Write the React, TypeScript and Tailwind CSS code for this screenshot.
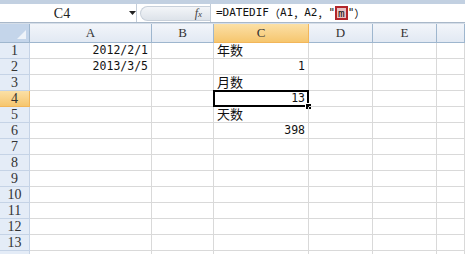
import React from "react"

const cols = ["A", "B", "C", "D", "E", ""]
const selCol = 2
const selRow = 4

type Cell = { text: string; right?: boolean; cjk?: boolean }

const data: Record<number, Record<number, Cell>> = {
    1: { 0: { text: "2012/2/1", right: true }, 2: { text: "年数", cjk: true } },
    2: { 0: { text: "2013/3/5", right: true }, 2: { text: "1", right: true } },
    3: { 2: { text: "月数", cjk: true } },
    4: { 2: { text: "13", right: true } },
    5: { 2: { text: "天数", cjk: true } },
    6: { 2: { text: "398", right: true } },
}

const mono = { fontFamily: '"DejaVu Sans Mono", monospace' }
const serif = { fontFamily: '"Liberation Serif", serif' }
const cjk = { fontFamily: '"Noto Sans CJK SC", sans-serif' }

function FormulaBar() {
    return (
        <div className="flex h-[19px] bg-white border-b border-[#a9b8c9]">
            {/* Name box */}
            <div className="relative flex w-[137px] items-center border-r border-[#c3cdd9]">
                <div className="w-[124px] text-center text-[14px] text-[#222]" style={serif}>C4</div>
                <svg width="7" height="4" viewBox="0 0 7 4" className="ml-[5px]">
                    <path d="M0 0h7L3.5 4z" fill="#222" />
                </svg>
            </div>
            {/* fx area */}
            <div className="flex w-[73px] items-center pl-[3px]">
                <div className="flex h-[15px] flex-1 items-center justify-end rounded-l-full border border-r-0 border-[#c8d0da] bg-gradient-to-b from-[#f3f5f8] to-[#dde3ea] pr-[8px]">
                    <span className="text-[12px] italic text-[#444]" style={serif}>
                        f<span className="text-[9px]">x</span>
                    </span>
                </div>
            </div>
            {/* Formula */}
            <div className="flex flex-1 items-center border-l border-[#c3cdd9] pl-[5px] text-[#111]">
                <span className="text-[11px]" style={mono}>=DATEDIF</span>
                <span className="text-[11px]" style={cjk}>（</span>
                <span className="text-[11px]" style={mono}>A1</span>
                <span className="text-[11px]" style={cjk}>，</span>
                <span className="text-[11px]" style={mono}>A2</span>
                <span className="text-[11px]" style={cjk}>，</span>
                <span className="text-[11px]" style={mono}>"</span>
                <span className="flex h-[14px] items-center border-2 border-[#b3262b] bg-[#e9c3c3] px-[1px] text-[11px] leading-none" style={mono}>m</span>
                <span className="text-[11px]" style={mono}>"</span>
                <span className="text-[11px]" style={cjk}>）</span>
            </div>
        </div>
    )
}

function HeaderRow() {
    return (
        <>
            <div className="relative h-[19px] border-r border-b border-[#9eb6ce] bg-[#c4d5ea]">
                <svg width="9" height="9" viewBox="0 0 9 9" className="absolute right-[3px] bottom-[3px]">
                    <path d="M9 0v9H0z" fill="#eef3f9" />
                </svg>
            </div>
            {cols.map((c, i) => (
                <div
                    key={i}
                    className={
                        i === selCol
                            ? "flex h-[19px] items-center justify-center border-r border-b border-[#f2b65a] bg-gradient-to-b from-[#fbe0a6] to-[#f6c66e] text-[13px] text-[#333]"
                            : "flex h-[19px] items-center justify-center border-r border-b border-[#9eb6ce] bg-gradient-to-b from-[#f2f5fa] to-[#e2e9f3] text-[13px] text-[#333]"
                    }
                    style={serif}
                >
                    {c}
                </div>
            ))}
        </>
    )
}

function Row({ n, label }: { n: number; label: boolean }) {
    const row = data[n] || {}
    return (
        <>
            <div
                className={
                    n === selRow
                        ? "flex h-[16px] items-center justify-center border-r border-b border-[#f2b65a] bg-gradient-to-b from-[#fbe0a6] to-[#f6c66e] text-[14px] text-[#333]"
                        : "flex h-[16px] items-center justify-center border-r border-b border-[#c5d3e6] bg-[#e4ecf7] text-[14px] text-[#333]"
                }
                style={serif}
            >
                {label ? n : ""}
            </div>
            {cols.map((_, i) => {
                const cell = row[i]
                const selected = n === selRow && i === selCol
                return (
                    <div
                        key={i}
                        className={
                            "relative flex h-[16px] items-end border-r border-b border-[#d9d9d9] px-[3px] text-[#111] " +
                            (cell?.right ? "justify-end" : "justify-start")
                        }
                    >
                        {cell && (
                            <span
                                className={cell.cjk ? "text-[13px] leading-[16px] whitespace-nowrap" : "text-[11.5px] leading-[15px] whitespace-nowrap"}
                                style={cell.cjk ? cjk : mono}
                            >
                                {cell.text}
                            </span>
                        )}
                        {selected && (
                            <>
                                <div className="absolute -top-[1px] -left-[1px] -right-[1px] -bottom-[1px] border-2 border-black" />
                                <div className="absolute -right-[3px] -bottom-[3px] h-[5px] w-[5px] bg-black outline outline-1 outline-white" />
                            </>
                        )}
                    </div>
                )
            })}
        </>
    )
}

export default function App() {
    const rows = Array.from({ length: 14 }, (_, i) => i + 1)
    return (
        <div className="h-[254px] w-[465px] overflow-hidden bg-white">
            <div className="h-[4px] bg-[#c2d0e1]" />
            <FormulaBar />
            <div className="h-[1px] bg-[#d5dee9]" />
            <div className="grid grid-cols-[30px_122px_62px_95px_64px_64px_1fr]">
                <HeaderRow />
                {rows.map(n => (
                    <Row key={n} n={n} label={n < 14} />
                ))}
            </div>
        </div>
    )
}
